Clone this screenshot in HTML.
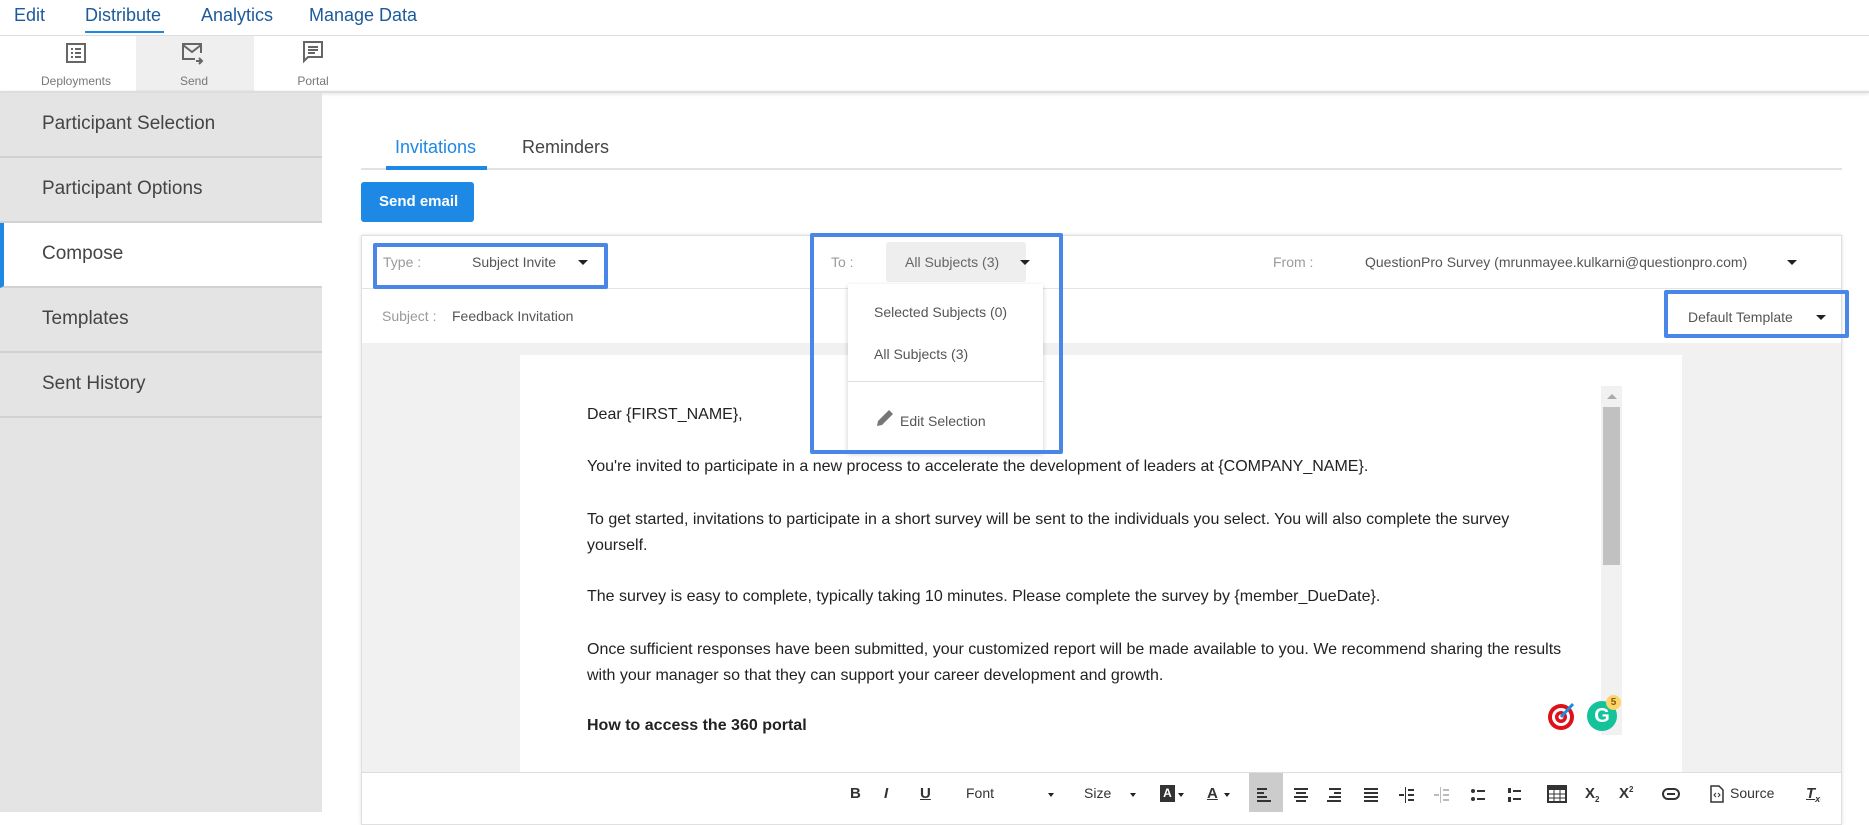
<!DOCTYPE html>
<html><head><meta charset="utf-8">
<style>
*{margin:0;padding:0;box-sizing:border-box}
body{width:1869px;height:812px;overflow:hidden;background:#fff;font-family:"Liberation Sans",sans-serif;position:relative;color:#333}
.a{position:absolute;white-space:nowrap}
.nav{font-size:18px;color:#1d5a9a;top:5px}
.sb{position:absolute;left:0;width:322px;height:65px;border-bottom:2px solid #d2d2d2;font-size:19px;color:#444;padding:20px 0 0 42px}
.lbl{color:#9a9a9a;font-size:14px}
.val{color:#555;font-size:14px}
.caret{width:0;height:0;border-left:5px solid transparent;border-right:5px solid transparent;border-top:5px solid #222;position:absolute}
.p{position:absolute;left:587px;font-size:16px;color:#222;line-height:26px;width:1000px}
.tb{position:absolute;top:785px;font-size:15px;color:#333;font-weight:bold}
.ic{position:absolute;top:74px;font-size:12px;color:#777;width:120px;text-align:center}
</style></head><body>
<!-- top nav -->
<div class="a nav" style="left:14px">Edit</div>
<div class="a nav" style="left:85px">Distribute</div>
<div class="a" style="left:85px;top:31px;width:79px;height:2px;background:#1e88e5"></div>
<div class="a nav" style="left:201px">Analytics</div>
<div class="a nav" style="left:309px">Manage Data</div>
<div class="a" style="left:0;top:35px;width:1869px;height:1px;background:#ddd"></div>
<!-- second bar -->
<div class="a" style="left:136px;top:36px;width:118px;height:56px;background:#efefef"></div>
<svg class="a" style="left:65px;top:42px" width="22" height="22" viewBox="0 0 22 22"><rect x="2" y="2" width="18" height="18" fill="none" stroke="#666" stroke-width="2"/><rect x="6" y="6" width="2" height="2" fill="#666"/><rect x="10" y="6" width="6" height="2" fill="#666"/><rect x="6" y="10" width="2" height="2" fill="#666"/><rect x="10" y="10" width="6" height="2" fill="#666"/><rect x="6" y="14" width="2" height="2" fill="#666"/><rect x="10" y="14" width="6" height="2" fill="#666"/></svg>
<svg class="a" style="left:181px;top:42px" width="24" height="24" viewBox="0 0 24 24"><path d="M14 17H2V2h18v9" fill="none" stroke="#666" stroke-width="2"/><path d="M2 3l9 7 9-7" fill="none" stroke="#666" stroke-width="2"/><path d="M15 19h6M18 16l3 3-3 3" fill="none" stroke="#666" stroke-width="2"/></svg>
<svg class="a" style="left:302px;top:40px" width="22" height="24" viewBox="0 0 22 24"><path d="M2 2h18v15H6l-4 4z" fill="none" stroke="#666" stroke-width="2"/><path d="M6 7h10M6 10h10M6 13h7" stroke="#666" stroke-width="2"/></svg>
<div class="ic" style="left:16px">Deployments</div>
<div class="ic" style="left:134px">Send</div>
<div class="ic" style="left:253px">Portal</div>
<div class="a" style="left:0;top:91px;width:1869px;height:2px;background:#ddd;box-shadow:0 1px 3px rgba(0,0,0,.15)"></div>
<!-- sidebar -->
<div class="a" style="left:0;top:93px;width:322px;height:719px;background:#e4e4e4"></div>
<div class="sb" style="top:93px">Participant Selection</div>
<div class="sb" style="top:158px">Participant Options</div>
<div class="sb" style="top:223px;background:#fff;border-left:4px solid #1e88e5;padding-left:38px">Compose</div>
<div class="sb" style="top:288px">Templates</div>
<div class="sb" style="top:353px">Sent History</div>
<!-- tabs -->
<div class="a" style="left:395px;top:137px;font-size:18px;color:#1e88e5">Invitations</div>
<div class="a" style="left:522px;top:137px;font-size:18px;color:#444">Reminders</div>
<div class="a" style="left:361px;top:168px;width:1481px;height:2px;background:#e2e2e2"></div>
<div class="a" style="left:386px;top:166px;width:101px;height:4px;background:#1e88e5"></div>
<div class="a" style="left:361px;top:182px;width:113px;height:40px;background:#1e88e5;border-radius:3px;color:#fff;font-size:15px;font-weight:bold;padding:11px 0 0 18px">Send email</div>
<!-- card -->
<div class="a" style="left:361px;top:235px;width:1481px;height:590px;border:1px solid #e0e0e0;box-shadow:0 0 4px rgba(0,0,0,.12);background:#fff"></div>
<div class="a" style="left:362px;top:288px;width:1479px;height:1px;background:#e3e3e3"></div>
<div class="a lbl" style="left:383px;top:254px">Type :</div>
<div class="a val" style="left:472px;top:254px">Subject Invite</div>
<div class="caret" style="left:578px;top:260px"></div>
<div class="a" style="left:373px;top:243px;width:235px;height:46px;border:4px solid #4a86e8;border-radius:2px"></div>
<div class="a lbl" style="left:831px;top:254px">To :</div>
<div class="a" style="left:886px;top:242px;width:140px;height:40px;background:#eee;border-radius:3px"></div>
<div class="a val" style="left:905px;top:254px;color:#666">All Subjects (3)</div>
<div class="caret" style="left:1020px;top:260px"></div>
<div class="a lbl" style="left:1273px;top:254px">From :</div>
<div class="a val" style="left:1365px;top:254px">QuestionPro Survey (mrunmayee.kulkarni@questionpro.com)</div>
<div class="caret" style="left:1787px;top:260px"></div>
<div class="a lbl" style="left:382px;top:308px">Subject :</div>
<div class="a val" style="left:452px;top:308px">Feedback Invitation</div>
<div class="a val" style="left:1688px;top:309px">Default Template</div>
<div class="caret" style="left:1816px;top:315px"></div>
<div class="a" style="left:1664px;top:290px;width:185px;height:48px;border:4px solid #4a86e8;border-radius:2px"></div>
<!-- editor area -->
<div class="a" style="left:362px;top:343px;width:1479px;height:429px;background:#f1f1f1"></div>
<div class="a" style="left:520px;top:355px;width:1162px;height:417px;background:#fff"></div>
<div class="a" style="left:1601px;top:386px;width:21px;height:349px;background:#f1f1f1"></div>
<div class="a" style="left:1607px;top:394px;width:0;height:0;border-left:5px solid transparent;border-right:5px solid transparent;border-bottom:5px solid #aaa"></div>
<div class="a" style="left:1603px;top:407px;width:17px;height:158px;background:#c1c1c1"></div>
<div class="p" style="top:402px">Dear {FIRST_NAME},</div>
<div class="p" style="top:454px">You're invited to participate in a new process to accelerate the development of leaders at {COMPANY_NAME}.</div>
<div class="p" style="top:507px">To get started, invitations to participate in a short survey will be sent to the individuals you select. You will also complete the survey<br>yourself.</div>
<div class="p" style="top:584px">The survey is easy to complete, typically taking 10 minutes. Please complete the survey by {member_DueDate}.</div>
<div class="p" style="top:637px">Once sufficient responses have been submitted, your customized report will be made available to you. We recommend sharing the results<br>with your manager so that they can support your career development and growth.</div>
<div class="p" style="top:713px;font-weight:bold">How to access the 360 portal</div>
<svg class="a" style="left:1547px;top:701px" width="30" height="30" viewBox="0 0 30 30"><circle cx="14" cy="16" r="13" fill="#e0101a"/><circle cx="14" cy="16" r="9" fill="#fff"/><circle cx="14" cy="16" r="6" fill="#e0101a"/><circle cx="14" cy="16" r="2.5" fill="#fff"/><path d="M14 16L26 3" stroke="#1a8fe0" stroke-width="3"/></svg>
<div class="a" style="left:1587px;top:701px;width:30px;height:30px;border-radius:50%;background:#15c39a;color:#fff;font-weight:bold;font-size:20px;text-align:center;line-height:30px">G</div>
<div class="a" style="left:1606px;top:695px;width:15px;height:15px;border-radius:50%;background:#fdd36b;color:#8a5a00;font-size:10px;font-weight:bold;text-align:center;line-height:15px">5</div>
<!-- dropdown -->
<div class="a" style="left:848px;top:284px;width:195px;height:168px;background:#fff;box-shadow:0 2px 5px rgba(0,0,0,.2)"></div>
<div class="a val" style="left:874px;top:304px">Selected Subjects (0)</div>
<div class="a val" style="left:874px;top:346px">All Subjects (3)</div>
<div class="a" style="left:848px;top:381px;width:195px;height:1px;background:#ddd"></div>
<svg class="a" style="left:876px;top:409px" width="18" height="18" viewBox="0 0 18 18"><path d="M1 17l1-5L13 1l4 4L6 16z" fill="#777"/></svg>
<div class="a val" style="left:900px;top:413px">Edit Selection</div>
<div class="a" style="left:810px;top:233px;width:253px;height:221px;border:4px solid #4a86e8;border-radius:2px"></div>
<!-- toolbar -->
<div class="a" style="left:362px;top:772px;width:1479px;height:1px;background:#ddd"></div>
<div class="a" style="left:1249px;top:773px;width:34px;height:39px;background:#ccc"></div>
<div class="tb" style="left:850px">B</div>
<div class="tb" style="left:884px;font-style:italic">I</div>
<div class="tb" style="left:920px;text-decoration:underline">U</div>
<div class="tb" style="left:966px;font-weight:normal;font-size:14px">Font</div>
<div class="caret" style="left:1048px;top:793px;border-width:4px 3px 0"></div>
<div class="tb" style="left:1084px;font-weight:normal;font-size:14px">Size</div>
<div class="caret" style="left:1130px;top:793px;border-width:4px 3px 0"></div>
<div class="a" style="left:1160px;top:785px;width:15px;height:17px;background:#333;color:#fff;font-size:12px;font-weight:bold;text-align:center;line-height:17px">A</div>
<div class="caret" style="left:1178px;top:793px;border-width:4px 3px 0"></div>
<div class="tb" style="left:1207px;text-decoration:underline">A</div>
<div class="caret" style="left:1224px;top:793px;border-width:4px 3px 0"></div>
<svg class="a" style="left:1257px;top:787px" width="130" height="16" viewBox="0 0 130 16"><g fill="#333"><rect x="0" y="1" width="10" height="2"/><rect x="0" y="5" width="7" height="2"/><rect x="0" y="9" width="10" height="2"/><rect x="0" y="13" width="14" height="2"/>
<rect x="37" y="1" width="14" height="2"/><rect x="39" y="5" width="10" height="2"/><rect x="37" y="9" width="14" height="2"/><rect x="39" y="13" width="10" height="2"/>
<rect x="72" y="1" width="12" height="2"/><rect x="77" y="5" width="7" height="2"/><rect x="72" y="9" width="12" height="2"/><rect x="70" y="13" width="14" height="2"/>
<rect x="107" y="1" width="14" height="2"/><rect x="107" y="5" width="14" height="2"/><rect x="107" y="9" width="14" height="2"/><rect x="107" y="13" width="14" height="2"/></g></svg>
<svg class="a" style="left:1399px;top:787px" width="140" height="16" viewBox="0 0 140 16"><g fill="#333"><rect x="6" y="0" width="1" height="16"/><rect x="0" y="7" width="5" height="2"/><rect x="9" y="2" width="6" height="2"/><rect x="9" y="7" width="6" height="2"/><rect x="9" y="12" width="6" height="2"/></g>
<g fill="#bbb"><rect x="41" y="0" width="1" height="16"/><rect x="35" y="7" width="5" height="2"/><rect x="44" y="2" width="6" height="2"/><rect x="44" y="7" width="6" height="2"/><rect x="44" y="12" width="6" height="2"/></g>
<g fill="#333"><circle cx="74" cy="4" r="2"/><circle cx="74" cy="12" r="2"/><rect x="78" y="3" width="8" height="2"/><rect x="78" y="11" width="8" height="2"/>
<rect x="109" y="1" width="3" height="5"/><rect x="109" y="10" width="3" height="5"/><rect x="114" y="3" width="8" height="2"/><rect x="114" y="11" width="8" height="2"/></g></svg>
<svg class="a" style="left:1547px;top:785px" width="20" height="18" viewBox="0 0 20 18"><rect x="1" y="1" width="18" height="16" fill="none" stroke="#333" stroke-width="2"/><rect x="1" y="1" width="18" height="4" fill="#333"/><path d="M7 5v12M13 5v12M1 9h18M1 13h18" stroke="#333"/></svg>
<div class="tb" style="left:1585px">X<sub style="font-size:8px">2</sub></div>
<div class="tb" style="left:1619px">X<sup style="font-size:8px">2</sup></div>
<svg class="a" style="left:1662px;top:788px" width="18" height="12" viewBox="0 0 18 12"><rect x="1" y="1" width="16" height="10" rx="5" fill="none" stroke="#333" stroke-width="2"/><path d="M5 6h8" stroke="#333" stroke-width="2"/></svg>
<svg class="a" style="left:1710px;top:785px" width="14" height="18" viewBox="0 0 14 18"><path d="M1 1h8l4 4v12H1z" fill="none" stroke="#333" stroke-width="1.5"/><path d="M6 8l-2 2 2 2M8 8l2 2-2 2" stroke="#333" fill="none"/></svg>
<div class="tb" style="left:1730px;font-weight:normal;font-size:14px">Source</div>
<div class="tb" style="left:1806px;font-style:italic;text-decoration:underline">T<sub style="font-size:9px">x</sub></div>
</body></html>
